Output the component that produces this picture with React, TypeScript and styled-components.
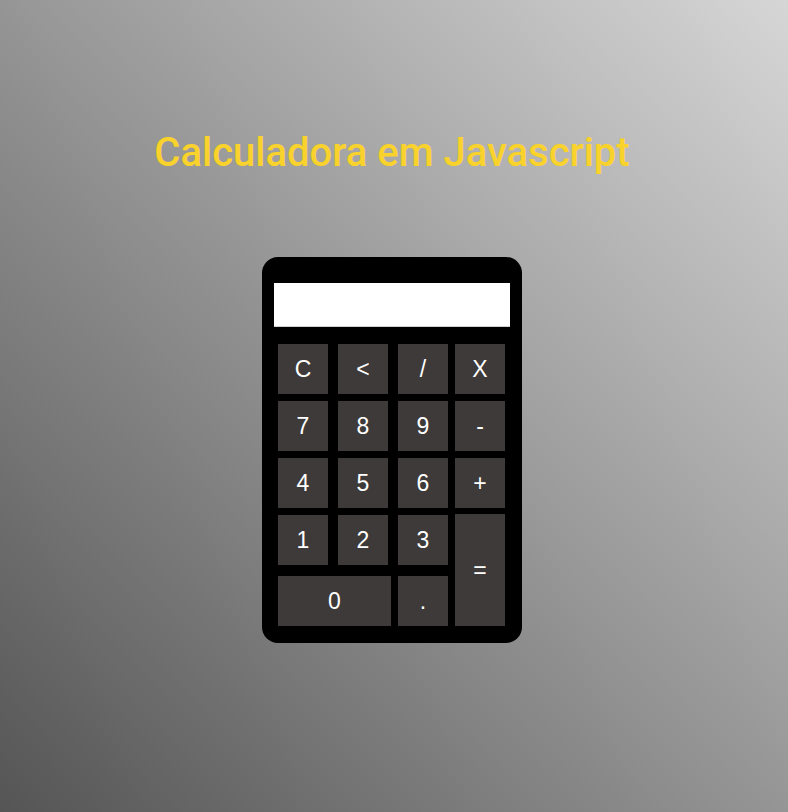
import React from "react";
import styled, { createGlobalStyle } from "styled-components";

const GlobalStyle = createGlobalStyle`
  html, body {
    margin: 0;
    padding: 0;
  }
  body {
    font-family: "Liberation Sans", Arial, sans-serif;
  }
`;

const Page = styled.div`
  box-sizing: border-box;
  width: 100%;
  min-height: 812px;
  padding: 0 4px 0 0;
  display: flex;
  flex-direction: column;
  align-items: center;
  background: linear-gradient(to top right, #555555, #d6d6d6);
`;

const Title = styled.h1`
  margin: 129px 0 0;
  font-family: Roboto, "Noto Sans", sans-serif;
  font-size: 40px;
  font-weight: 500;
  line-height: 47px;
  color: #f9d22b;
  text-align: center;
`;

const Calculator = styled.div`
  box-sizing: border-box;
  width: 260px;
  margin-top: 81px;
  padding: 26px 12px 17px;
  background: #000;
  border-radius: 16px;
  display: flex;
  flex-direction: column;
`;

const Display = styled.input`
  box-sizing: border-box;
  width: 236px;
  height: 44px;
  border: none;
  border-bottom: 1px solid #cfcfcf;
  background: #fff;
  font-family: "Liberation Sans", Arial, sans-serif;
  font-size: 24px;
  text-align: right;
  padding: 0 8px;
  outline: none;
`;

const Keypad = styled.div`
  display: grid;
  grid-template-columns: 60px 60px 57px 50px;
  grid-template-rows: 57px 57px 57px 61px 50px;
  margin: 17px 0 0 4px;
`;

const Key = styled.button<{ $wide?: boolean; $tall?: boolean }>`
  width: ${(p) => (p.$wide ? "113px" : "50px")};
  height: ${(p) => (p.$tall ? "112px" : "50px")};
  grid-column: ${(p) => (p.$wide ? "span 2" : "auto")};
  grid-row: ${(p) => (p.$tall ? "span 2" : "auto")};
  margin-top: ${(p) => (p.$tall ? "-1px" : "0")};
  display: flex;
  align-items: center;
  justify-content: center;
  padding: 0;
  border: none;
  background: #3d3a39;
  color: #fff;
  font-family: "Liberation Sans", Arial, sans-serif;
  font-size: 23px;
  cursor: pointer;
`;

type KeyDef = { label: string; wide?: boolean; tall?: boolean };

const keys: KeyDef[] = [
  { label: "C" },
  { label: "<" },
  { label: "/" },
  { label: "X" },
  { label: "7" },
  { label: "8" },
  { label: "9" },
  { label: "-" },
  { label: "4" },
  { label: "5" },
  { label: "6" },
  { label: "+" },
  { label: "1" },
  { label: "2" },
  { label: "3" },
  { label: "=", tall: true },
  { label: "0", wide: true },
  { label: "." },
];

export default function App() {
  return (
    <>
      <GlobalStyle />
      <Page>
        <Title>Calculadora em Javascript</Title>
        <Calculator>
          <Display type="text" readOnly />
          <Keypad>
            {keys.map((k) => (
              <Key key={k.label} $wide={k.wide} $tall={k.tall}>
                {k.label}
              </Key>
            ))}
          </Keypad>
        </Calculator>
      </Page>
    </>
  );
}
